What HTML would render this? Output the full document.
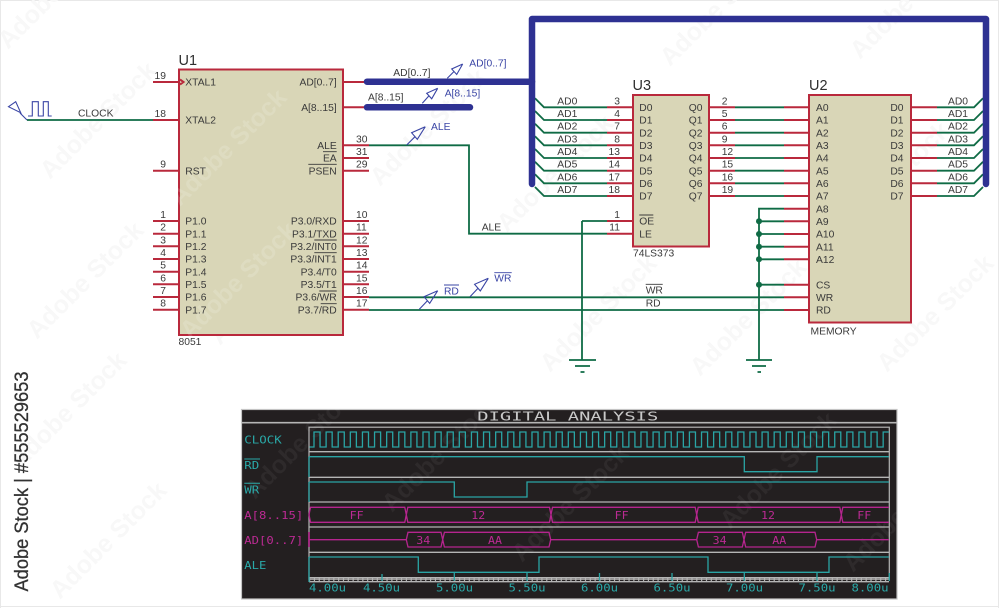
<!DOCTYPE html>
<html><head><meta charset="utf-8"><title>Schematic</title>
<style>
html,body{margin:0;padding:0;background:#fff}
svg{display:block;font-family:"Liberation Sans",sans-serif}
.t{font-size:10.3px;fill:#3a3a3a}
.h{font-size:14.5px;fill:#2f2f2f}
.b{font-size:10.3px;fill:#3a45a5}
.e{text-anchor:end}
.v{font-family:"DejaVu Sans Mono",monospace;font-size:10.5px;fill:#2aa9a8}
.m{fill:#bb2a93}
.w{font-size:25px;font-weight:bold;fill:#f8f8f8}
.ww{font-size:25px;font-weight:bold;fill:#fff;fill-opacity:.05}
</style></head><body>
<svg width="1000" height="608" viewBox="0 0 1000 608" xmlns="http://www.w3.org/2000/svg">
<rect width="1000" height="608" fill="#fff"/>
<path d="M.5 608V.5H998.5V608M0 606.5H999" fill="none" stroke="#e8e8e8"/>

<!-- watermarks under -->
<g class="w">
<text transform="translate(8,50) rotate(-45)">Adobe Stock</text>
<text transform="translate(50,180) rotate(-45)">Adobe Stock</text>
<text transform="translate(37,340) rotate(-45)">Adobe Stock</text>
<text transform="translate(220,346) rotate(-45)">Adobe Stock</text>
<text transform="translate(380,187) rotate(-45)">Adobe Stock</text>
<text transform="translate(507,233) rotate(-45)">Adobe Stock</text>
<text transform="translate(550,373) rotate(-45)">Adobe Stock</text>
<text transform="translate(670,67) rotate(-45)">Adobe Stock</text>
<text transform="translate(843,240) rotate(-45)">Adobe Stock</text>
<text transform="translate(887,373) rotate(-45)">Adobe Stock</text>
<text transform="translate(700,377) rotate(-45)">Adobe Stock</text>
<text transform="translate(860,60) rotate(-45)">Adobe Stock</text>
<text transform="translate(20,470) rotate(-45)">Adobe Stock</text>
<text transform="translate(60,600) rotate(-45)">Adobe Stock</text>
</g>

<!-- chips -->
<g fill="#d9d6b7" stroke="#b9293c" stroke-width="2">
<rect x="179" y="69.5" width="164" height="265.5"/>
<rect x="633" y="95" width="76" height="151.5"/>
<rect x="809" y="95" width="102" height="227.5"/>
</g>
<g class="ww" style="fill-opacity:.15">
<text transform="translate(180,207) rotate(-45)">Adobe Stock</text>
<text transform="translate(190,340) rotate(-45)">Adobe Stock</text>
</g>

<!-- red pins -->
<path fill="none" stroke="#b9293c" stroke-width="2" d="
M153 82H179M153 120H179M153 170.7H179
M153 221H179M153 233.7H179M153 246.3H179M153 259H179M153 271.7H179M153 284.3H179M153 297H179M153 309.7H179
M343 82H369M343 107.3H369M343 145.3H369M343 158H369M343 170.7H369
M343 221H369M343 233.7H369M343 246.3H369M343 259H369M343 271.7H369M343 284.3H369M343 297H369M343 309.7H369
M607 107.3H633M607 120H633M607 132.7H633M607 145.3H633M607 158H633M607 170.7H633M607 183.3H633M607 196H633M607 221H633M607 233.7H633
M709 107.3H735M709 120H735M709 132.7H735M709 145.3H735M709 158H735M709 170.7H735M709 183.3H735M709 196H735
M784 107.3H809M784 120H809M784 132.7H809M784 145.3H809M784 158H809M784 170.7H809M784 183.3H809M784 196H809M784 208.7H809M784 221.3H809M784 234H809M784 246.7H809M784 259.3H809M784 284.7H809M784 297.3H809M784 310H809
M911 107.3H937M911 120H937M911 132.7H937M911 145.3H937M911 158H937M911 170.7H937M911 183.3H937M911 196H937
M180 79.5L183.5 82L180 84.5"/>

<!-- green wires -->
<path fill="none" stroke="#0f6b45" stroke-width="1.8" d="
M27 120H153
M369 145.3H469V233.7H607M582 221H607M582 221V360
M369 297.3H784M369 310H784
M535 98.3L544 107.3H607M535 111L544 120H607M535 123.7L544 132.7H607M535 136.3L544 145.3H607M535 149L544 158H607M535 161.7L544 170.7H607M535 174.3L544 183.3H607M535 187L544 196H607
M735 107.3H784M735 120H784M735 132.7H784M735 145.3H784M735 158H784M735 170.7H784M735 183.3H784M735 196H784
M784 208.7H759V360M759 221.3H784M759 234H784M759 246.7H784M759 259.3H784M759 284.7H784
M937 107.3H974L983 98.3M937 120H974L983 111M937 132.7H974L983 123.7M937 145.3H974L983 136.3M937 158H974L983 149M937 170.7H974L983 161.7M937 183.3H974L983 174.3M937 196H974L983 187
M569 360H596M575 366H590M580.5 372H584.5
M746 360H772M752 366H766M757.5 372H761"/>
<g fill="#0f6b45"><circle cx="759" cy="221.3" r="3"/><circle cx="759" cy="234" r="3"/><circle cx="759" cy="246.7" r="3"/><circle cx="759" cy="259.3" r="3"/><circle cx="759" cy="284.7" r="3"/></g>

<!-- buses -->
<g fill="none" stroke="#2e3192" stroke-linecap="round" stroke-linejoin="round">
<path stroke-width="6.5" d="M532 184V19H986V184"/>
<path stroke-width="6.5" d="M367 81.7H532"/>
<path stroke-width="6.5" d="M367 107.3H470"/>
</g>

<!-- probes -->
<g fill="none" stroke="#3a45a5" stroke-width="1.1">
<path d="M8.5 106.7L15.7 101.7L20.7 112.7ZM20 113L27 120"/>
<path d="M28 116H32.3V101.7H38.3V116H43.3V101.7H48.3V116H51.7"/>
<path d="M462.7 64l-11 5l5 5.5l6-10.500M454 71.500l-6.700 6.800"/>
<path d="M437.700 88.300l-11 5l5 5.500l6-10.500M429 95.800l-6.700 7.500"/>
<path d="M425.3 126.700l-13.700 6l5.700 6.600l8-12.600M415 136.700l-8.300 8.300"/>
<path d="M437.700 290.700l-13.700 6l5.700 6.600l8-12.600M427.400 300.700l-8.100 8.600"/>
<path d="M488.300 278.300l-13.700 6l5.700 6.600l8-12.600M478 288.300l-8 8.400"/>
</g>

<!-- text chips -->
<text class="h" x="178.5" y="65">U1</text>
<text class="h" x="632.5" y="90">U3</text>
<text class="h" x="809" y="90">U2</text>
<g class="t">
<text x="178.5" y="345">8051</text>
<text x="633" y="256.5">74LS373</text>
<text x="810.5" y="334.5">MEMORY</text>
<text x="78" y="116.7">CLOCK</text>
<text x="393.3" y="76">AD[0..7]</text>
<text x="368" y="100.7">A[8..15]</text>
<text x="481.7" y="230.7">ALE</text>
<text x="645.7" y="293.7">WR</text>
<text x="645.7" y="306.3">RD</text>

<text x="185.3" y="85.7">XTAL1</text><text x="185.3" y="123.7">XTAL2</text><text x="185.3" y="174.4">RST</text>
<text x="185.3" y="224.7">P1.0</text><text x="185.3" y="237.4">P1.1</text><text x="185.3" y="250">P1.2</text><text x="185.3" y="262.7">P1.3</text><text x="185.3" y="275.4">P1.4</text><text x="185.3" y="288">P1.5</text><text x="185.3" y="300.7">P1.6</text><text x="185.3" y="313.4">P1.7</text>

<g class="e">
<text x="336.7" y="85.7">AD[0..7]</text><text x="336.7" y="111">A[8..15]</text><text x="336.7" y="149">ALE</text><text x="336.7" y="161.7">EA</text><text x="336.7" y="174.4">PSEN</text>
<text x="336.7" y="224.7">P3.0/RXD</text><text x="336.7" y="237.4">P3.1/TXD</text><text x="336.7" y="250">P3.2/INT0</text><text x="336.7" y="262.7">P3.3/INT1</text><text x="336.7" y="275.4">P3.4/T0</text><text x="336.7" y="288">P3.5/T1</text><text x="336.7" y="300.7">P3.6/WR</text><text x="336.7" y="313.4">P3.7/RD</text>
<text x="166" y="79">19</text><text x="166" y="117">18</text><text x="166" y="167.7">9</text>
<text x="166" y="218">1</text><text x="166" y="230.7">2</text><text x="166" y="243.3">3</text><text x="166" y="256">4</text><text x="166" y="268.7">5</text><text x="166" y="281.3">6</text><text x="166" y="294">7</text><text x="166" y="306.7">8</text>
<text x="620" y="104.3">3</text><text x="620" y="117">4</text><text x="620" y="129.7">7</text><text x="620" y="142.3">8</text><text x="620" y="155">13</text><text x="620" y="167.7">14</text><text x="620" y="180.3">17</text><text x="620" y="193">18</text><text x="620" y="218">1</text><text x="620" y="230.7">11</text>
<text x="702.5" y="111">Q0</text><text x="702.5" y="123.7">Q1</text><text x="702.5" y="136.4">Q2</text><text x="702.5" y="149">Q3</text><text x="702.5" y="161.7">Q4</text><text x="702.5" y="174.4">Q5</text><text x="702.5" y="187">Q6</text><text x="702.5" y="199.7">Q7</text>
<text x="903.5" y="111">D0</text><text x="903.5" y="123.7">D1</text><text x="903.5" y="136.4">D2</text><text x="903.5" y="149">D3</text><text x="903.5" y="161.7">D4</text><text x="903.5" y="174.4">D5</text><text x="903.5" y="187">D6</text><text x="903.5" y="199.7">D7</text>
</g>

<text x="356" y="142.3">30</text><text x="356" y="155">31</text><text x="356" y="167.7">29</text>
<text x="356" y="218">10</text><text x="356" y="230.7">11</text><text x="356" y="243.3">12</text><text x="356" y="256">13</text><text x="356" y="268.7">14</text><text x="356" y="281.3">15</text><text x="356" y="294">16</text><text x="356" y="306.7">17</text>

<text x="557.3" y="104.3">AD0</text><text x="557.3" y="117">AD1</text><text x="557.3" y="129.7">AD2</text><text x="557.3" y="142.3">AD3</text><text x="557.3" y="155">AD4</text><text x="557.3" y="167.7">AD5</text><text x="557.3" y="180.3">AD6</text><text x="557.3" y="193">AD7</text>
<text x="639.3" y="111">D0</text><text x="639.3" y="123.7">D1</text><text x="639.3" y="136.4">D2</text><text x="639.3" y="149">D3</text><text x="639.3" y="161.7">D4</text><text x="639.3" y="174.4">D5</text><text x="639.3" y="187">D6</text><text x="639.3" y="199.7">D7</text><text x="639.3" y="224.7">OE</text><text x="639.3" y="237.4">LE</text>
<text x="721.7" y="104.3">2</text><text x="721.7" y="117">5</text><text x="721.7" y="129.7">6</text><text x="721.7" y="142.3">9</text><text x="721.7" y="155">12</text><text x="721.7" y="167.7">15</text><text x="721.7" y="180.3">16</text><text x="721.7" y="193">19</text>
<text x="816" y="111">A0</text><text x="816" y="123.7">A1</text><text x="816" y="136.4">A2</text><text x="816" y="149">A3</text><text x="816" y="161.7">A4</text><text x="816" y="174.4">A5</text><text x="816" y="187">A6</text><text x="816" y="199.7">A7</text><text x="816" y="212.4">A8</text><text x="816" y="225">A9</text><text x="816" y="237.7">A10</text><text x="816" y="250.4">A11</text><text x="816" y="263">A12</text><text x="816" y="288.4">CS</text><text x="816" y="301">WR</text><text x="816" y="313.7">RD</text>
<text x="948" y="104.3">AD0</text><text x="948" y="117">AD1</text><text x="948" y="129.7">AD2</text><text x="948" y="142.3">AD3</text><text x="948" y="155">AD4</text><text x="948" y="167.7">AD5</text><text x="948" y="180.3">AD6</text><text x="948" y="193">AD7</text>
</g>
<path fill="none" stroke="#3a3a3a" stroke-width=".9" d="M323 151.7H336.7M308.3 164.3H336.7M314.3 240H336.7M314.3 252.7H336.7M319.3 291H336.7M320.7 303.7H336.7M639.3 215H653.3M645.7 284.3H662.7"/>
<g class="b">
<text x="469.3" y="66.7">AD[0..7]</text><text x="444.7" y="96.7">A[8..15]</text><text x="431" y="130">ALE</text><text x="444" y="294.7">RD</text><text x="494.3" y="281.7">WR</text>
</g>
<path fill="none" stroke="#3a45a5" stroke-width=".9" d="M444 285H459M494.3 272.7H511.7"/>

<!-- analysis panel -->
<rect x="241.5" y="409.5" width="655.5" height="189.5" fill="#231f20" stroke="#c4c4c4" stroke-width="1.2"/>
<path d="M242 422.7H897" stroke="#b5b5b5" stroke-width="1.6"/>
<text x="477.3" y="420.300" textLength="181" lengthAdjust="spacingAndGlyphs" style="font-family:'DejaVu Sans Mono',monospace;font-size:12px;fill:#c9c9c9">DIGITAL ANALYSIS</text>
<rect x="309" y="427.2" width="580.3" height="152" fill="none" stroke="#b5b5b5" stroke-width="1.2"/>
<path fill="none" stroke="#b5b5b5" stroke-width="1.3" d="M309 451.7H889M309 477.3H889M309 502H889M309 527H889M309 552.3H889M309 577.700H889M309 581.700H889"/>
<path fill="none" stroke="#b5b5b5" stroke-width="4" stroke-dasharray="1.2 3.64" d="M309 579.700H889"/>
<g class="ww">
<text transform="translate(255,500) rotate(-45)">Adobe Stock</text>
<text transform="translate(392,513) rotate(-45)">Adobe Stock</text>
<text transform="translate(522,563) rotate(-45)">Adobe Stock</text>
<text transform="translate(730,530) rotate(-45)">Adobe Stock</text>
<text transform="translate(853,573) rotate(-45)">Adobe Stock</text>
</g>
<g fill="none" stroke="#2aa5a5" stroke-width="1.3">
<path d="M309.5 447H314
v-15h6.05v15h6.06v-15h6.05v15h6.06v-15h6.05v15h6.06v-15h6.05v15h6.06v-15h6.05v15h6.06v-15h6.05v15h6.06v-15h6.05v15h6.06v-15h6.05v15h6.06v-15h6.05v15h6.06v-15h6.05v15h6.06
v-15h6.05v15h6.06v-15h6.05v15h6.06v-15h6.05v15h6.06v-15h6.05v15h6.06v-15h6.05v15h6.06v-15h6.05v15h6.06v-15h6.05v15h6.06v-15h6.05v15h6.06v-15h6.05v15h6.06v-15h6.05v15h6.06
v-15h6.05v15h6.06v-15h6.05v15h6.06v-15h6.05v15h6.06v-15h6.05v15h6.06v-15h6.05v15h6.06v-15h6.05v15h6.06v-15h6.05v15h6.06v-15h6.05v15h6.06v-15h6.05v15h6.06v-15h6.05v15h6.06
v-15h6.05v15h6.06v-15h6.05v15h6.06v-15h6.05v15h6.06v-15h6.05v15h6.06v-15h6.05v15h6.06v-15h6.05v15h6.06v-15h6.05v15h6.06v-15h6.05v15h6.06v-15h6.05v15h6.06v-15h6.05v15h6.06
v-15h6.05v15h6.06v-15h6.05v15h6.06v-15h6.05v15h6.06v-15h6.05v15h6.06v-15h6.05v15h6.06v-15h6.05v15h6.06v-15h6.05v15h6.06
V432H889"/>
<path d="M309 456.7H744.3V471.7H817V456.7H889"/>
<path d="M309 482H454.3V497H527V482H889"/>
<path d="M309 557H418.3V572.3H539V557H708V572.3H829V557H889M309 557V582"/>
<path d="M309 456.7V477M309 482V502"/>
<path d="M382 574V581M454.3 573V581M527 573V581M599.5 573V581M672 573V581M744.3 573V581M817 573V581M889.3 573V581"/>
</g>
<g fill="none" stroke="#b5258e" stroke-width="1.3">
<path d="M309 514.8L310.5 507.3H404.8L406.3 514.8L404.8 522.3H310.5ZM406.3 514.8L407.8 507.3H549.5L551 514.8L549.5 522.3H407.8ZM551 514.8L552.5 507.3H695.2L696.7 514.8L695.2 522.3H552.5ZM696.7 514.8L698.2 507.3H839.8L841.3 514.8L839.8 522.3H698.2ZM889 507.3H842.8L841.3 514.8L842.8 522.3H889"/>
<path d="M309 539.7H406.3L408 532.3H441L442.7 539.7L441 547H408L406.3 539.7M442.7 539.7L444.4 532.3H549L550.7 539.7L549 547H444.4L442.7 539.7M550.7 539.7H696.7L698.4 532.3H742.3L744 539.7L742.3 547H698.4L696.7 539.7M744 539.7L745.7 532.3H815L816.7 539.7L815 547H745.7L744 539.7M816.7 539.7H889"/>
<path d="M309 532V547" stroke-width="1.6"/>
</g>
<g class="v">
<text x="244.3" y="443.7" textLength="37.4" lengthAdjust="spacingAndGlyphs">CLOCK</text>
<text x="244.3" y="469" textLength="15" lengthAdjust="spacingAndGlyphs">RD</text>
<text x="244.3" y="493.7" textLength="15" lengthAdjust="spacingAndGlyphs">WR</text>
<text x="244.3" y="569" textLength="22" lengthAdjust="spacingAndGlyphs">ALE</text>
<text x="309" y="591.7" textLength="37" lengthAdjust="spacingAndGlyphs">4.00u</text>
<text x="363" y="591.7" textLength="37" lengthAdjust="spacingAndGlyphs">4.50u</text>
<text x="436" y="591.7" textLength="37" lengthAdjust="spacingAndGlyphs">5.00u</text>
<text x="508.5" y="591.7" textLength="37" lengthAdjust="spacingAndGlyphs">5.50u</text>
<text x="581" y="591.7" textLength="37" lengthAdjust="spacingAndGlyphs">6.00u</text>
<text x="653.5" y="591.7" textLength="37" lengthAdjust="spacingAndGlyphs">6.50u</text>
<text x="726" y="591.7" textLength="37" lengthAdjust="spacingAndGlyphs">7.00u</text>
<text x="798.5" y="591.7" textLength="37" lengthAdjust="spacingAndGlyphs">7.50u</text>
<text x="851.5" y="591.7" textLength="37" lengthAdjust="spacingAndGlyphs">8.00u</text>
</g>
<path fill="none" stroke="#2aa9a8" stroke-width="1" d="M244.3 459H260M244.3 483.3H260"/>
<g class="v m">
<text x="244.3" y="519" textLength="59" lengthAdjust="spacingAndGlyphs">A[8..15]</text>
<text x="244.3" y="544" textLength="59" lengthAdjust="spacingAndGlyphs">AD[0..7]</text>
<text x="349.7" y="519" textLength="14" lengthAdjust="spacingAndGlyphs">FF</text><text x="471.3" y="519" textLength="14" lengthAdjust="spacingAndGlyphs">12</text><text x="614.7" y="519" textLength="14" lengthAdjust="spacingAndGlyphs">FF</text><text x="761" y="519" textLength="14" lengthAdjust="spacingAndGlyphs">12</text><text x="857.3" y="519" textLength="14" lengthAdjust="spacingAndGlyphs">FF</text>
<text x="416.3" y="544" textLength="14" lengthAdjust="spacingAndGlyphs">34</text><text x="488" y="544" textLength="14" lengthAdjust="spacingAndGlyphs">AA</text><text x="712.7" y="544" textLength="14" lengthAdjust="spacingAndGlyphs">34</text><text x="772.3" y="544" textLength="14" lengthAdjust="spacingAndGlyphs">AA</text>
</g>

<!-- side credit -->
<text transform="translate(28,591.5) rotate(-90)" textLength="220" lengthAdjust="spacingAndGlyphs" style="font-size:19px;fill:#333;stroke:#333;stroke-width:.3">Adobe Stock | #555529653</text>
</svg>
</body></html>
